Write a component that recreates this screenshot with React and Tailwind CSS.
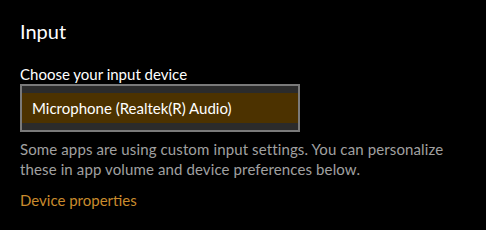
export default function App() {
  return (
    <div className="w-[486px] h-[230px] bg-black pl-5 pt-[17px] font-['Lato',sans-serif] overflow-hidden">
      <div className="text-[20px] leading-[28px] text-white">Input</div>
      <div className="mt-[19px] text-[15px] leading-[20px] text-white">Choose your input device</div>
      <div className="w-[280px] h-[48px] border-2 border-[#7a7a7a] bg-[#2b2b2b] py-[7px]">
        <div className="h-[30px] bg-[#4c3200] pl-[10px] flex items-center text-white text-[15px] leading-[20px]">
          Microphone (Realtek(R) Audio)
        </div>
      </div>
      <div className="mt-[7px] w-[460px] text-[15px] leading-[20px] tracking-[0.12px] text-[#a0a0a0]">
        Some apps are using custom input settings. You can personalize these in app volume and device preferences below.
      </div>
      <div className="mt-[11px] text-[15px] leading-[20px] text-[#c98b2d]">Device properties</div>
    </div>
  );
}
